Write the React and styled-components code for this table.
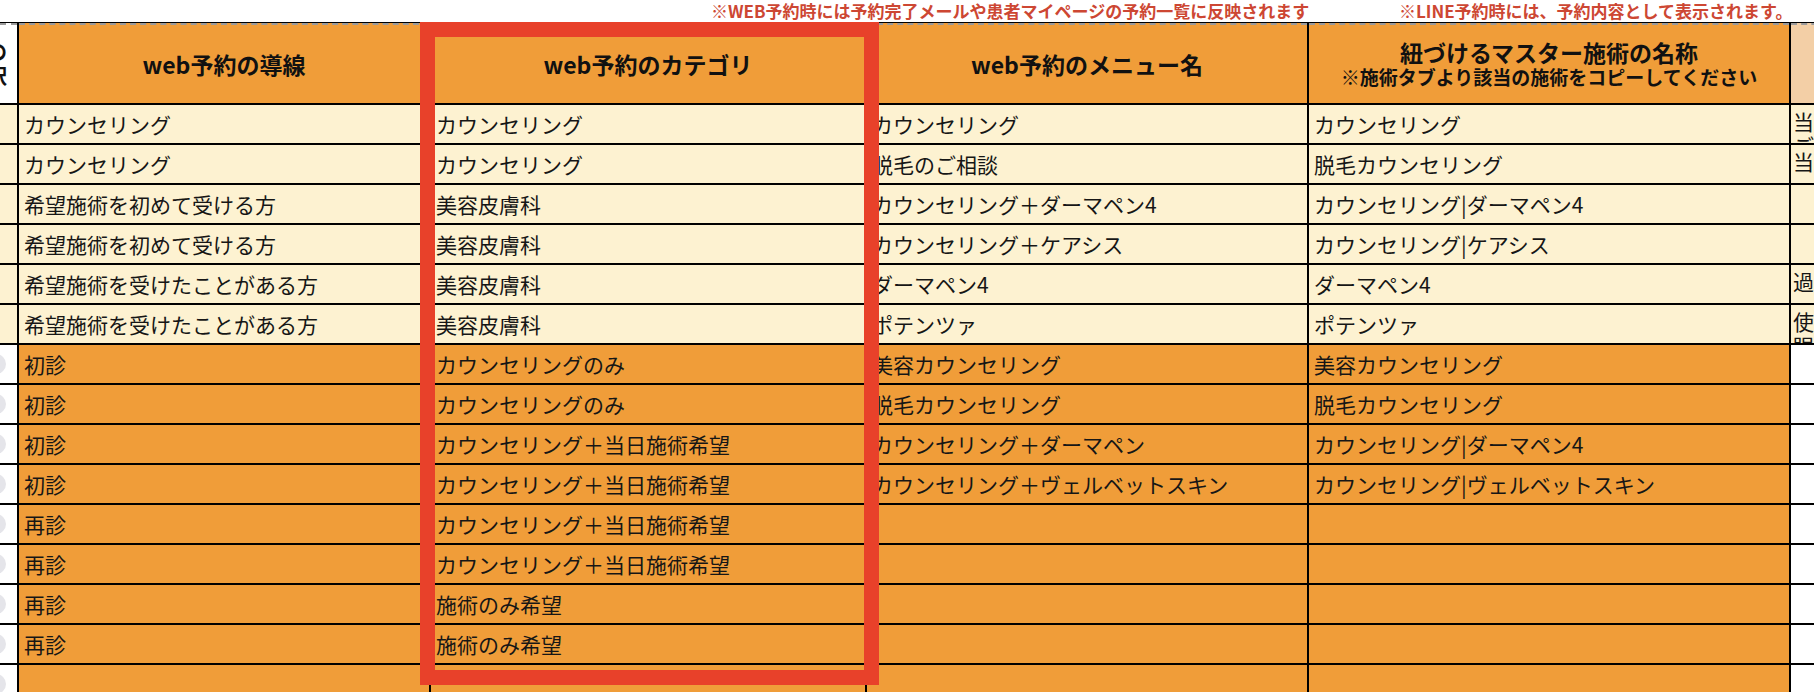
import React from 'react';
import styled, { createGlobalStyle } from 'styled-components';

const GlobalStyle = createGlobalStyle`
  html, body {
    margin: 0;
    padding: 0;
    background: #ffffff;
  }
  body {
    font-family: "Noto Sans CJK JP", "Noto Sans", sans-serif;
    color: #161616;
  }
  * {
    box-sizing: border-box;
  }
`;

const TONES = {
  cream: '#fdf2d1',
  orange: '#f09d39',
  white: '#ffffff',
  peach: '#f3cfa6',
};

const Page = styled.div`
  position: relative;
  width: 1814px;
  height: 692px;
  overflow: hidden;
  background: #ffffff;
`;

const NoteBar = styled.div`
  display: flex;
  align-items: center;
  height: 22px;
  padding-left: 711px;
`;

const Note = styled.span`
  flex: 0 0 ${p => (p.$width ? `${p.$width}px` : 'auto')};
  font-size: 17px;
  font-weight: 700;
  line-height: 20px;
  color: #cd4733;
  white-space: nowrap;
`;

const Sheet = styled.div`
  display: grid;
  grid-template-columns: 17px 410px 434px 440px 480px 240px;
  grid-template-rows: 80px;
  grid-auto-rows: 38px;
  gap: 2px;
  width: max-content;
  background: #000000;
  border-top: 1px solid #000000;
`;

const HeaderCell = styled.div`
  display: flex;
  flex-direction: column;
  align-items: center;
  justify-content: center;
  border-top: 2px dashed #9b9b9b;
  background: ${p => TONES[p.$tone]};
  font-size: 23px;
  font-weight: 700;
  line-height: 25px;
  text-align: center;
  color: #111111;
`;

const HeaderSub = styled.span`
  font-size: 19px;
  line-height: 23px;
`;

const LeadHeader = styled(HeaderCell)`
  align-items: flex-end;
  overflow: hidden;
  padding-right: 10px;
  font-size: 20px;
  line-height: 24px;
  white-space: pre;
  text-align: right;
`;

const LeadCell = styled.div`
  display: flex;
  align-items: center;
  overflow: hidden;
  background: ${p => TONES[p.$tone]};
`;

const Dot = styled.span`
  flex: 0 0 20px;
  height: 20px;
  margin-left: -14px;
  border-radius: 50%;
  background: #e5e5ea;
`;

const Cell = styled.div`
  display: flex;
  align-items: center;
  padding: 0 5px;
  overflow: hidden;
  background: ${p => TONES[p.$tone]};
  font-size: 21px;
  line-height: 24px;
  white-space: nowrap;
`;

const RemarkCell = styled(Cell)`
  align-items: flex-start;
  padding: 4px 2px 0;
  white-space: pre;
`;

const Frame = styled.div`
  position: absolute;
  left: 420px;
  top: 22px;
  width: 459px;
  height: 663px;
  border: 15px solid #e8412a;
  pointer-events: none;
`;

const rows = [
  ['cream', 'カウンセリング', 'カウンセリング', 'カウンセリング', 'カウンセリング', '当日の施術をご希望の方は\nご来院時にお申し出ください'],
  ['cream', 'カウンセリング', 'カウンセリング', '脱毛のご相談', '脱毛カウンセリング', '当日の施術は行っておりません'],
  ['cream', '希望施術を初めて受ける方', '美容皮膚科', 'カウンセリング＋ダーマペン4', 'カウンセリング|ダーマペン4', ''],
  ['cream', '希望施術を初めて受ける方', '美容皮膚科', 'カウンセリング＋ケアシス', 'カウンセリング|ケアシス', ''],
  ['cream', '希望施術を受けたことがある方', '美容皮膚科', 'ダーマペン4', 'ダーマペン4', '過去に施術を受けたことがある方'],
  ['cream', '希望施術を受けたことがある方', '美容皮膚科', 'ポテンツァ', 'ポテンツァ', '使用する薬剤について\n眼の周りは施術できません'],
  ['orange', '初診', 'カウンセリングのみ', '美容カウンセリング', '美容カウンセリング', ''],
  ['orange', '初診', 'カウンセリングのみ', '脱毛カウンセリング', '脱毛カウンセリング', ''],
  ['orange', '初診', 'カウンセリング＋当日施術希望', 'カウンセリング＋ダーマペン', 'カウンセリング|ダーマペン4', ''],
  ['orange', '初診', 'カウンセリング＋当日施術希望', 'カウンセリング＋ヴェルベットスキン', 'カウンセリング|ヴェルベットスキン', ''],
  ['orange', '再診', 'カウンセリング＋当日施術希望', '', '', ''],
  ['orange', '再診', 'カウンセリング＋当日施術希望', '', '', ''],
  ['orange', '再診', '施術のみ希望', '', '', ''],
  ['orange', '再診', '施術のみ希望', '', '', ''],
  ['orange', '', '', '', '', ''],
];

const App = () => {
  return (
    <Page>
      <GlobalStyle />
      <NoteBar>
        <Note $width={688}>※WEB予約時には予約完了メールや患者マイページの予約一覧に反映されます</Note>
        <Note>※LINE予約時には、予約内容として表示されます。</Note>
      </NoteBar>

      <Sheet>
        <LeadHeader $tone="white">{'施術の\n選択'}</LeadHeader>
        <HeaderCell $tone="orange">web予約の導線</HeaderCell>
        <HeaderCell $tone="orange">web予約のカテゴリ</HeaderCell>
        <HeaderCell $tone="orange">web予約のメニュー名</HeaderCell>
        <HeaderCell $tone="orange">
          紐づけるマスター施術の名称
          <HeaderSub>※施術タブより該当の施術をコピーしてください</HeaderSub>
        </HeaderCell>
        <HeaderCell $tone="peach" />

        {rows.map(([tone, route, category, menu, master, remark], i) => {
          const isOrange = tone === 'orange';
          return (
            <React.Fragment key={i}>
              <LeadCell $tone={isOrange ? 'white' : tone}>{isOrange && <Dot />}</LeadCell>
              <Cell $tone={tone}>{route}</Cell>
              <Cell $tone={tone}>{category}</Cell>
              <Cell $tone={tone}>{menu}</Cell>
              <Cell $tone={tone}>{master}</Cell>
              <RemarkCell $tone={isOrange ? 'white' : tone}>{remark}</RemarkCell>
            </React.Fragment>
          );
        })}
      </Sheet>

      <Frame />
    </Page>
  );
};

export default App;
